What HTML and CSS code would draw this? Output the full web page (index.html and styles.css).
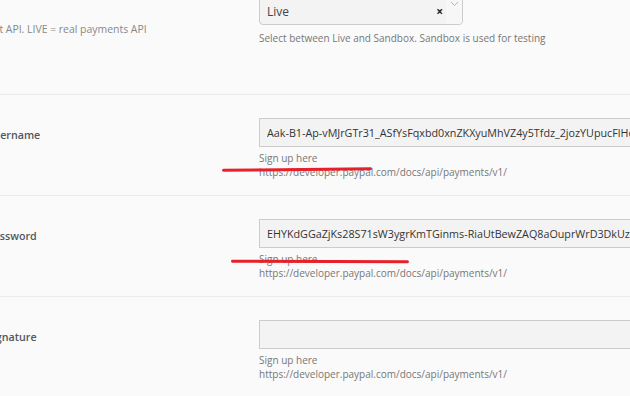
FILE: index.html
```html
<!DOCTYPE html>
<html>
<head>
    <meta charset="UTF-8">
    <title>PayPal settings</title>
    <link rel="stylesheet" href="styles.css">
</head>
<body>
    <div class="settings">
        <div class="row row-mode">
            <div class="label"><span class="hint">Sandbox = test API. LIVE = real payments API</span></div>
            <div class="field">
                <div class="select">
                    <span class="select-value">Live</span>
                    <span class="select-clear">&times;</span>
                    <span class="select-arrow">
                        <svg width="9" height="6" viewBox="0 0 9 6"><path d="M1 1l3.5 3.5L8 1" fill="none" stroke="#b5b5b5" stroke-width="1"/></svg>
                    </span>
                </div>
                <p class="desc">Select between Live and Sandbox. Sandbox is used for testing</p>
            </div>
        </div>

        <div class="row">
            <div class="label">Username</div>
            <div class="field">
                <input class="text" type="text" value="Aak-B1-Ap-vMJrGTr31_ASfYsFqxbd0xnZKXyuMhVZ4y5Tfdz_2jozYUpucFlHqW7xNc">
                <p class="help">Sign up here<br>https://developer.paypal.com/docs/api/payments/v1/</p>
            </div>
            <span class="mark mark-user"></span>
        </div>

        <div class="row">
            <div class="label">Password</div>
            <div class="field">
                <input class="text" type="text" value="EHYKdGGaZjKs28S71sW3ygrKmTGinms-RiaUtBewZAQ8aOuprWrD3DkUzKpLw">
                <p class="help">Sign up here<br>https://developer.paypal.com/docs/api/payments/v1/</p>
            </div>
            <span class="mark mark-pass"></span>
        </div>

        <div class="row">
            <div class="label">Signature</div>
            <div class="field">
                <input class="text" type="text" value="">
                <p class="help">Sign up here<br>https://developer.paypal.com/docs/api/payments/v1/</p>
            </div>
        </div>
    </div>
</body>
</html>
```

FILE: styles.css
```css
html, body {
    margin: 0;
    overflow: hidden;
}
body {
    background: #fafafa;
    font-family: "Open Sans", Arial, sans-serif;
    color: #555;
}
.settings {
    margin-left: -15px;
    width: 800px;
}
.row {
    position: relative;
    display: grid;
    grid-template-columns: 274px 1fr;
    height: 100px;
    border-bottom: 1px solid #ebebeb;
}
.row-mode {
    height: 120px;
    margin-top: -26px;
}
.label {
    padding: 32px 0 0 2px;
    font-size: 10.7px;
    line-height: 16px;
    font-weight: 600;
    color: #50575e;
}
.row-mode .label {
    padding-top: 47px;
}
.hint {
    display: block;
    margin-left: -56px;
    white-space: nowrap;
    font-weight: 400;
    color: #888;
    font-size: 10.45px;
}
.field {
    padding-top: 23px;
}
.select {
    display: flex;
    align-items: center;
    width: 202px;
    height: 26px;
    border: 1px solid #ccc;
    border-radius: 4px;
    background: #f3f3f3;
    font-size: 12px;
    color: #444;
}
.select-value {
    flex: 1;
    padding-left: 7px;
}
.select-clear {
    font-weight: 700;
    color: #222;
    font-size: 12px;
    padding-right: 3px;
}
.select-arrow {
    width: 16px;
    height: 100%;
    background: #f7f7f7;
    border-radius: 0 4px 4px 0;
    display: flex;
    justify-content: center;
    padding-top: 3px;
    box-sizing: border-box;
}
.desc {
    margin: 6px 0 0;
    font-size: 10px;
    line-height: 14px;
    color: #777;
}
.text {
    display: block;
    box-sizing: border-box;
    width: 420px;
    height: 29px;
    margin: 0;
    padding: 0 7px;
    border: 1px solid #ccc;
    border-radius: 0;
    background: #f3f3f3;
    font-family: "Open Sans", Arial, sans-serif;
    font-size: 10.75px;
    color: #333;
}
.help {
    margin: 5px 0 0;
    font-size: 10px;
    line-height: 13.5px;
    color: #777;
}
.mark {
    position: absolute;
    height: 3px;
    background: #e8202a;
    border-radius: 2px;
}
.mark-user {
    left: 237px;
    top: 73px;
    width: 150px;
    transform: rotate(-0.6deg);
}
.mark-pass {
    left: 246px;
    top: 64px;
    width: 178px;
    transform: rotate(0.2deg);
}
```
